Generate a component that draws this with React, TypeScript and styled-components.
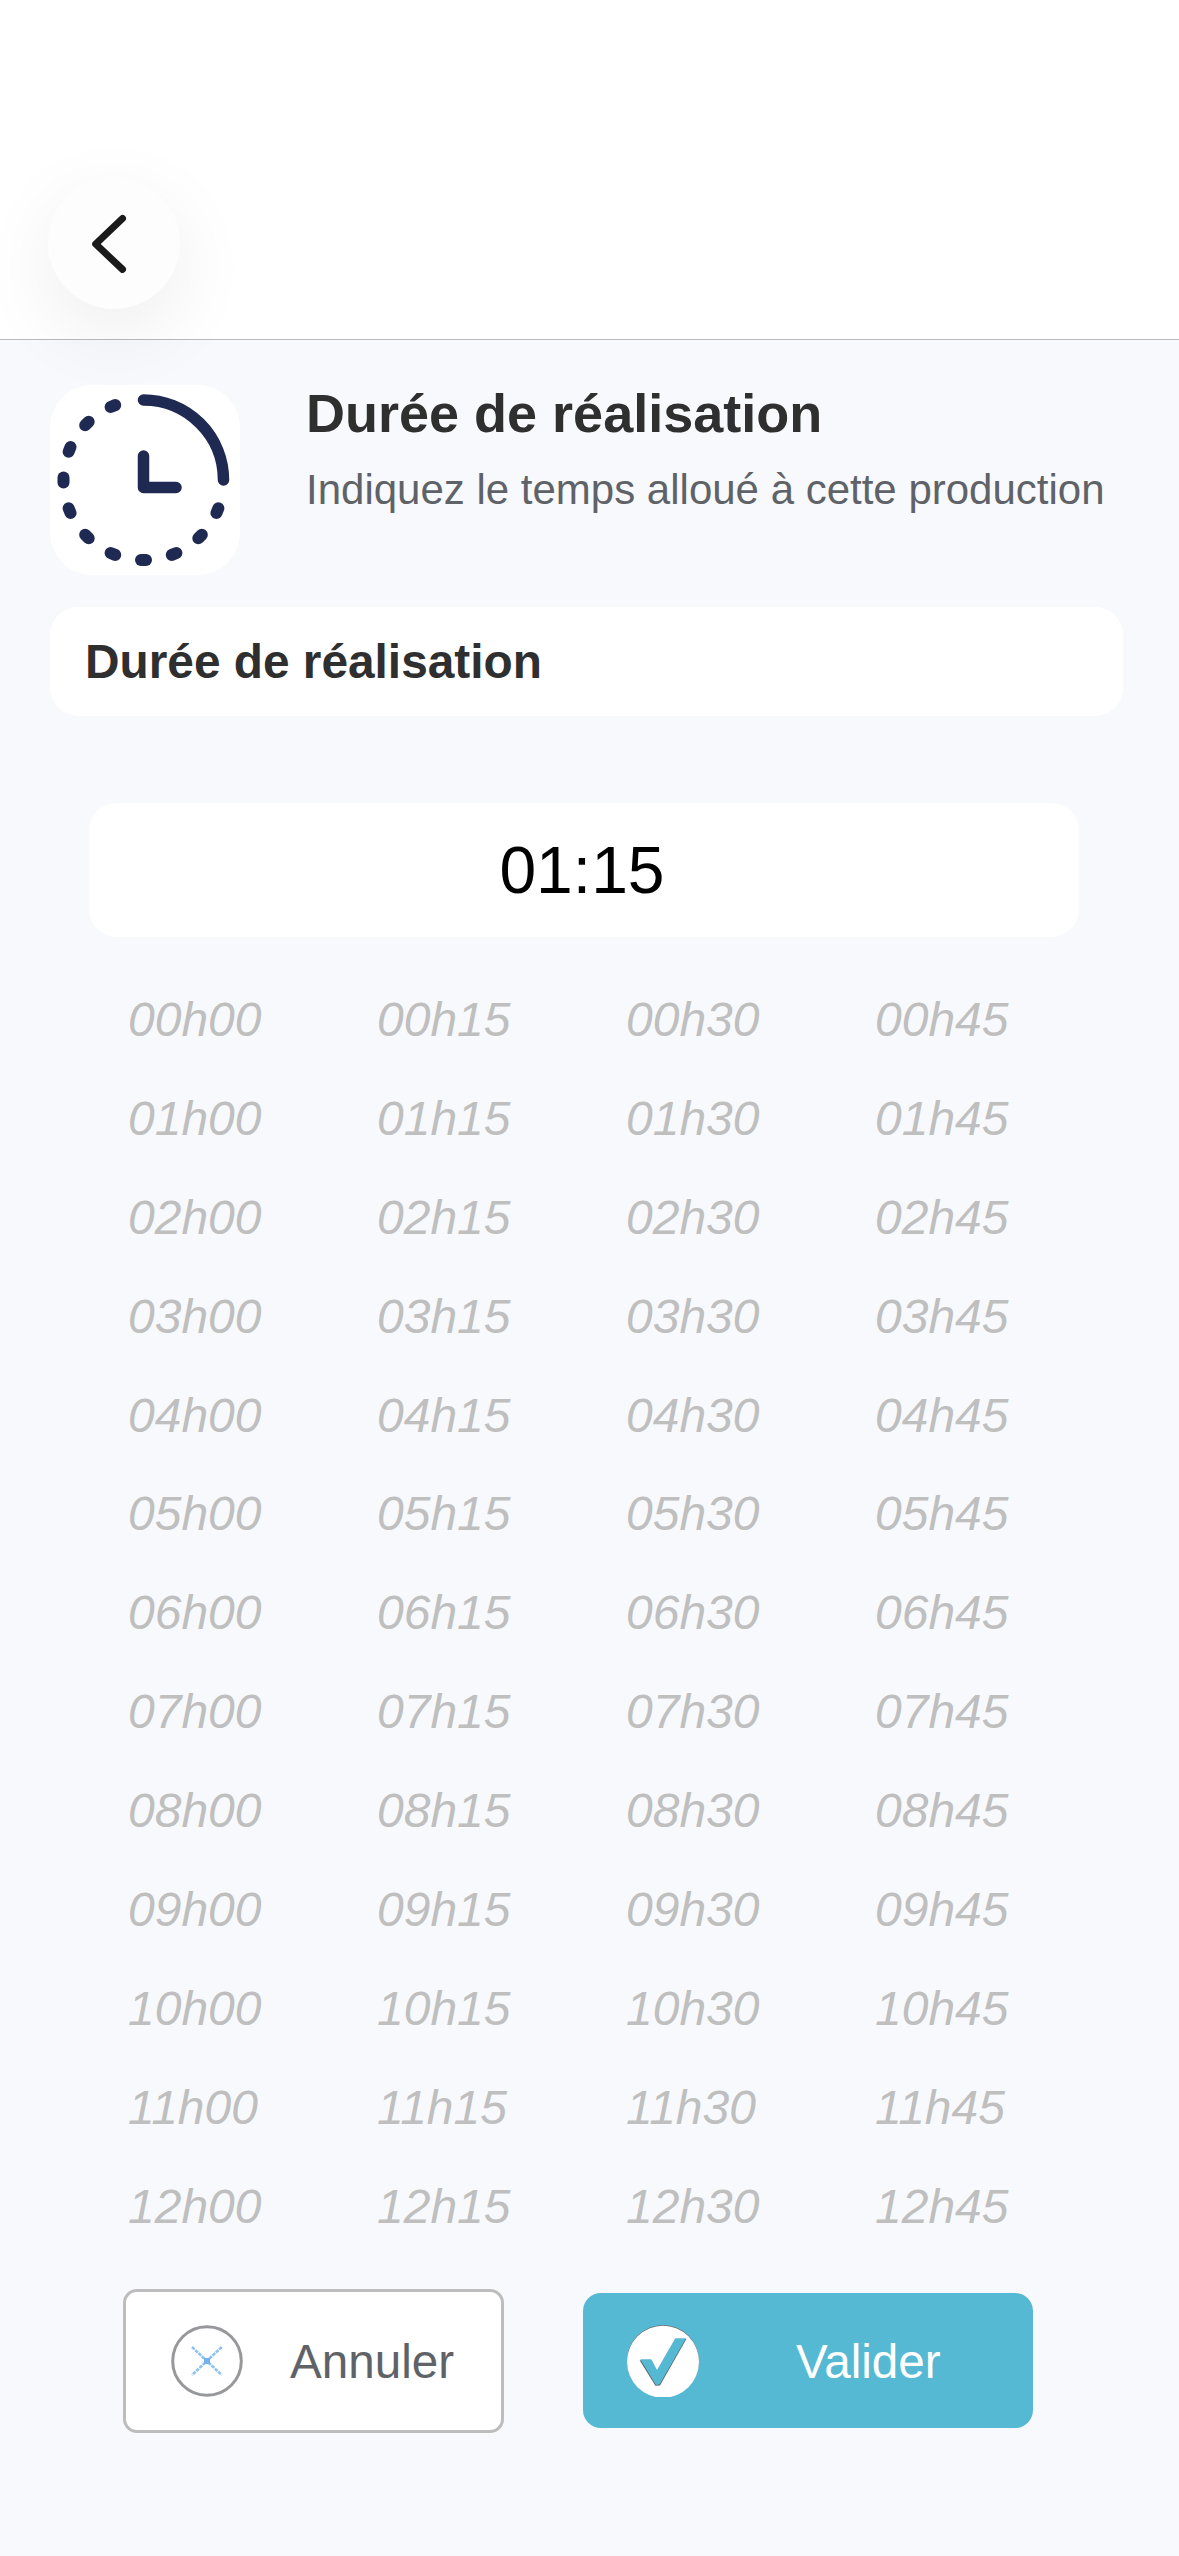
import React from "react";
import styled, { createGlobalStyle } from "styled-components";

const Global = createGlobalStyle`
  html, body { margin: 0; padding: 0; background: #f8f9fd; }
  * { box-sizing: border-box; }
  body { font-family: "Liberation Sans", Arial, sans-serif; }
`;
const Page = styled.div`
  width: 1179px;
  min-height: 2556px;
  background: #f8f9fd;
  display: flex;
  flex-direction: column;
`;
const Header = styled.header`
  position: relative;
  z-index: 2;
  height: 340px;
  padding: 177px 0 0 48px;
  background: #fff;
  border-bottom: 1.5px solid #b9b9be;
`;
const BackButton = styled.button`
  width: 132px;
  height: 132px;
  padding: 0;
  border: 0;
  border-radius: 50%;
  background: #fdfdfd;
  box-shadow: 0 24px 80px rgba(0, 0, 0, 0.07);
  display: flex;
  align-items: center;
  justify-content: center;
`;
const Intro = styled.section`
  display: flex;
  gap: 66px;
  margin-top: 45px;
  padding: 0 50px;
`;
const Tile = styled.div`
  width: 190px;
  height: 190px;
  flex: none;
  border-radius: 42px;
  background: #fff;
`;
const IntroText = styled.div`
  display: flex;
  flex-direction: column;
`;
const Title = styled.h1`
  margin: 0;
  font-size: 54px;
  line-height: 56px;
  font-weight: 700;
  color: #2f2f2f;
  white-space: nowrap;
`;
const Subtitle = styled.p`
  margin: 25px 0 0;
  font-size: 42px;
  line-height: 48px;
  color: #5f6368;
  white-space: nowrap;
`;
const FieldCard = styled.div`
  height: 109px;
  margin: 32px 56px 0 50px;
  padding-left: 35px;
  display: flex;
  align-items: center;
  border-radius: 28px;
  background: #fff;
  font-size: 47.8px;
  font-weight: 700;
  color: #2f2f2f;
`;
const ValueBox = styled.div`
  height: 134px;
  margin: 87px 100px 0 89px;
  padding-right: 4px;
  display: flex;
  align-items: center;
  justify-content: center;
  border-radius: 28px;
  background: #fff;
  font-size: 66px;
  color: #000;
`;
const TimeGrid = styled.div`
  display: grid;
  grid-template-columns: repeat(4, 249px);
  grid-auto-rows: 98.9px;
  margin-top: 33px;
  padding-left: 128px;
`;
const TimeOption = styled.div`
  display: flex;
  align-items: center;
  font-size: 48px;
  font-style: italic;
  color: #bfbfbf;
`;
const Actions = styled.div`
  display: flex;
  align-items: center;
  gap: 79px;
  margin-top: 33px;
  padding-left: 123px;
`;
const ActionButton = styled.button<{ $primary?: boolean }>`
  display: flex;
  align-items: center;
  width: ${(p) => (p.$primary ? "450px" : "381px")};
  height: ${(p) => (p.$primary ? "135px" : "144px")};
  padding: 0 0 0 ${(p) => (p.$primary ? "44px" : "45px")};
  gap: ${(p) => (p.$primary ? "97px" : "47px")};
  border: ${(p) => (p.$primary ? "0" : "3px solid #bdbdbd")};
  border-radius: ${(p) => (p.$primary ? "18px" : "14px")};
  background: ${(p) => (p.$primary ? "#55b9d3" : "#fff")};
  color: ${(p) => (p.$primary ? "#fff" : "#5f6368")};
  font-family: inherit;
  font-size: 47.6px;
`;
const ActionLabel = styled.span`
  margin-top: 2px;
`;

const dotAngles = [-22.5, -45, -67.5, -90, -112.5, -135, -157.5, 180, 157.5, 135, 112.5];

const ClockIcon = () => (
  <svg width="190" height="190" viewBox="0 0 190 190" fill="none" stroke="#1e2a52" strokeLinecap="round" strokeLinejoin="round">
    <path d="M93.5 15 A80 80 0 0 1 173.5 95" strokeWidth="11.5" />
    <path d="M93.5 71 V102.5 H126" strokeWidth="11.5" />
    {dotAngles.map((a) => (
      <line key={a} x1="91" y1="15" x2="96" y2="15" strokeWidth="12" transform={`rotate(${a} 93.5 95)`} />
    ))}
  </svg>
);

const ChevronIcon = () => (
  <svg width="70" height="70" viewBox="0 0 70 70" fill="none" stroke="#1a1a1a" strokeWidth="7" strokeLinecap="round" strokeLinejoin="round">
    <path d="M43.5 10.5 L16.7 36 L43.5 61.4" />
  </svg>
);

const CancelIcon = () => (
  <svg width="72" height="72" viewBox="0 0 72 72" fill="none">
    <circle cx="36" cy="36" r="34.3" fill="#fff" stroke="#96989b" strokeWidth="3" />
    <path d="M21 22 L50.7 50 M50.7 22 L21 50" stroke="#8cc2f0" strokeWidth="2.6" strokeDasharray="3.5 1" />
    <rect x="33" y="33" width="6" height="6" fill="#74b2ec" />
  </svg>
);

const CheckIcon = () => (
  <svg width="72" height="72" viewBox="0 0 72 72" fill="none">
    <circle cx="36" cy="36" r="36" fill="#6c6c6c" />
    <circle cx="36" cy="36.8" r="36" fill="#fff" />
    <polygon points="12.6,35.2 23.8,35.2 30,46 48.8,14 59.4,14 33,60.6 28.4,60.8" fill="#5f6a70" />
    <polygon points="13.3,34.3 24.3,34.3 30,45 48.3,13.3 59,13.3 32.7,59.3 29,60" fill="#55b9d3" />
  </svg>
);

const hours = Array.from({ length: 13 }, (_, i) => String(i).padStart(2, "0"));
const minutes = ["00", "15", "30", "45"];

export default function App() {
  return (
    <Page>
      <Global />
      <Header>
        <BackButton aria-label="Retour">
          <ChevronIcon />
        </BackButton>
      </Header>
      <Intro>
        <Tile>
          <ClockIcon />
        </Tile>
        <IntroText>
          <Title>Durée de réalisation</Title>
          <Subtitle>Indiquez le temps alloué à cette production</Subtitle>
        </IntroText>
      </Intro>
      <FieldCard>Durée de réalisation</FieldCard>
      <ValueBox>01:15</ValueBox>
      <TimeGrid>
        {hours.flatMap((h) => minutes.map((m) => <TimeOption key={h + m}>{`${h}h${m}`}</TimeOption>))}
      </TimeGrid>
      <Actions>
        <ActionButton>
          <CancelIcon />
          <ActionLabel>Annuler</ActionLabel>
        </ActionButton>
        <ActionButton $primary>
          <CheckIcon />
          <ActionLabel>Valider</ActionLabel>
        </ActionButton>
      </Actions>
    </Page>
  );
}
